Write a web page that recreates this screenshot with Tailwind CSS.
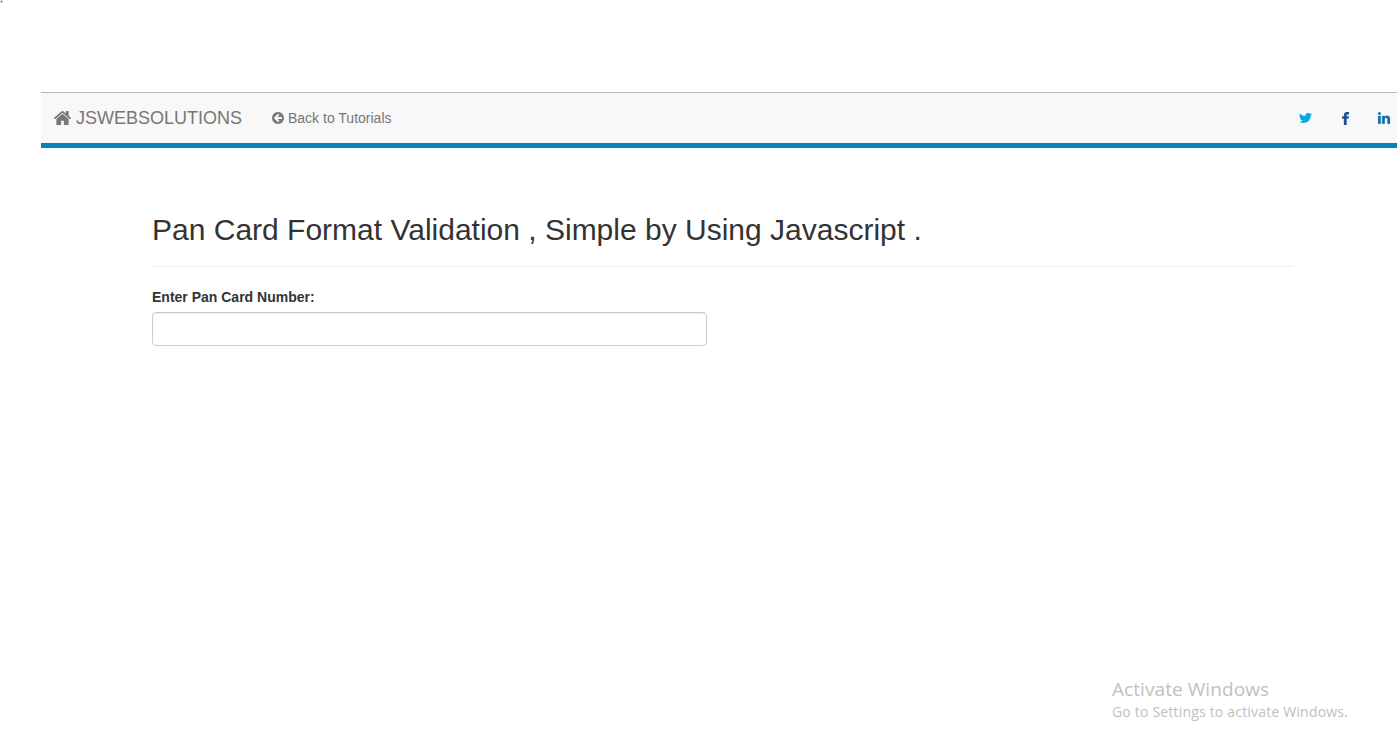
<!DOCTYPE html>
<html lang="en">
<head>
<meta charset="utf-8">
<title>Pan Card Format Validation</title>
<script src="https://cdn.jsdelivr.net/npm/@tailwindcss/browser@4"></script>
</head>
<body class="relative h-[754px] overflow-hidden bg-white pt-[92px] text-[14px] leading-5 text-[#333] font-['Liberation_Sans',sans-serif]">
<div class="absolute left-0 top-0 size-[3px] bg-[#e4e4f8]"><div class="ml-px mt-px size-px bg-[#101080]"></div></div>
<nav class="ml-[41px] flex h-[56px] items-center border-t border-b-5 border-t-[#b5b5b5] border-b-[#0780be] bg-[#f8f8f8] pl-[13px] text-[#777]">
  <a class="flex items-center text-[18px]">
    <svg class="mr-[5px] h-[14px] w-[17px]" viewBox="97 253 1598 1283" preserveAspectRatio="none" fill="currentColor"><path d="M1472 992v480q0 26-19 45t-45 19h-384v-384h-256v384h-384q-26 0-45-19t-19-45v-480q0-1 .5-3t.5-3l575-474 575 474q1 2 1 6zm223-69l-62 74q-8 9-21 11h-3q-13 0-21-7l-692-577-692 577q-12 8-24 7-13-2-21-11l-62-74q-8-10-7-23.5t11-21.5l719-599q32-26 76-26t76 26l244 204v-195q0-14 9-23t23-9h192q14 0 23 9t9 23v408l219 182q10 8 11 21.5t-7 23.5z"/></svg>
    <span class="w-[166px] whitespace-nowrap">JSWEBSOLUTIONS</span>
  </a>
  <a class="ml-[30px] flex items-center">
    <svg class="mr-1 size-3" viewBox="128 128 1536 1536" fill="currentColor"><path d="M1408 960v-128q0-26-19-45t-45-19h-502l189-189q19-19 19-45t-19-45l-91-91q-18-18-45-18t-45 18l-362 362-91 91q-18 18-18 45t18 45l91 91 362 362q18 18 45 18t45-18l91-91q18-18 18-45t-18-45l-189-189h502q26 0 45-19t19-45zm256-64q0 209-103 385.5t-279.500 279.500-385.500 103-385.500-103-279.500-279.500-103-385.500 103-385.500 279.500-279.500 385.500-103 385.500 103 279.500 279.500 103 385.500z"/></svg>
    <span>Back to Tutorials</span>
  </a>
  <div class="ml-auto flex items-center pr-[6px]">
    <svg class="h-[14px] w-[15px] text-[#08a8e8]" viewBox="0 0 1792 1792" preserveAspectRatio="none" fill="currentColor"><path d="M1684 408q-67 98-162 167 1 14 1 42 0 130-38 259.5t-115.5 248.5-184.5 210.5-258 146-323 54.5q-271 0-496-145 35 4 78 4 225 0 401-138-105-2-188-64.5t-114-159.5q33 5 61 5 43 0 85-11-112-23-185.5-111.5t-73.5-205.5v-4q68 38 146 41-66-44-105-115t-39-154q0-88 44-163 121 149 294.5 238.5t371.5 99.5q-8-38-8-74 0-134 94.5-228.5t228.5-94.5q140 0 236 102 109-21 205-78-37 115-142 178 93-10 186-50z"/></svg>
    <svg class="ml-[29px] h-[13px] w-[7px] text-[#1b4f96]" viewBox="480 128 870 1536" preserveAspectRatio="none" fill="currentColor" stroke="currentColor" stroke-width="35"><path d="M1343 140v264h-157q-86 0-116 36t-30 108v99h293l-39 256h-254v761h-306v-761h-255v-256h255v-128q0-186 104-288.500t277-102.500q147 0 228 12z"/></svg>
    <svg class="ml-[28px] size-[14px] text-[#0e6aa8]" viewBox="0 0 1792 1792" fill="currentColor" stroke="currentColor" stroke-width="25"><path d="M477 625v991h-330v-991h330zm21-306q1 73-50.500 122t-135.500 49h-2q-82 0-132-49t-50-122q0-74 51.500-122.500t134.500-48.500 133 48.500 51 122.500zm1166 729v568h-329v-530q0-105-40.500-164.500t-126.500-59.500q-63 0-105.500 34.500t-63.500 85.500q-11 30-11 81v553h-329q2-399 2-647t-1-296l-1-48h329v144h-2q20-32 41-56t56.500-52 87-43.500 114.500-15.500q171 0 275 113.500t104 332.500z"/></svg>
  </div>
</nav>
<main class="ml-[152px] w-[1141px] pt-[65px]">
  <h1 class="whitespace-nowrap text-[30px] leading-[33px]">Pan Card Format Validation , Simple by Using Javascript .</h1>
  <hr class="mt-5 border-[#eee]">
  <label for="pan" class="mt-5 block font-bold">Enter Pan Card Number:</label>
  <input id="pan" type="text" class="mt-[5px] block h-[34px] w-[555px] rounded-[4px] border border-[#ccc] bg-white px-3 shadow-[inset_0_1px_1px_rgba(0,0,0,0.075)]">
</main>
<aside class="absolute left-[1112px] top-[677px] whitespace-nowrap text-[#c0c0c0] font-['Open_Sans',sans-serif]">
  <div class="text-[19px] leading-6 tracking-[0.07px]">Activate Windows</div>
  <div class="text-[14px] leading-[22px] tracking-[0.19px]">Go to Settings to activate Windows.</div>
</aside>
</body>
</html>
